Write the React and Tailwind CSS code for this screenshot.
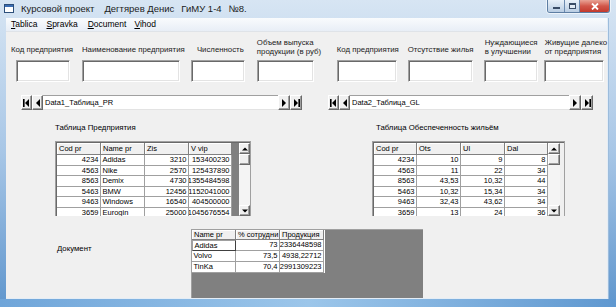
import React from "react";

var LEFT_ROWS = [
  ["4234", "Adidas", "3210", "153400230"],
  ["4563", "Nike", "2570", "125437890"],
  ["8563", "Demix", "4730", "1355484598"],
  ["5463", "BMW", "12456", "1152041000"],
  ["9463", "Windows", "16540", "404500000"],
  ["3659", "Eurogin", "25000", "1045676554"]
];

var RIGHT_ROWS = [
  ["4234", "10", "9", "8"],
  ["4563", "11", "22", "34"],
  ["8563", "43,53", "10,32", "44"],
  ["5463", "10,32", "15,34", "34"],
  ["9463", "32,43", "43,62", "34"],
  ["3659", "13", "24", "36"]
];

var DOC_ROWS = [
  ["Adidas", "73", "2336448598"],
  ["Volvo", "73,5", "4938,22712"],
  ["TinKa", "70,4", "2991309223"]
];

var sunken = "bg-white border border-[#a0a0a0] border-b-white border-r-white shadow-[inset_1px_1px_0_#696969,inset_-1px_-1px_0_#e3e3e3]";
var raised = "bg-[#f0f0f0] border border-white border-b-[#696969] border-r-[#696969] shadow-[inset_-1px_-1px_0_#a0a0a0]";

function Tri({ dir, bar }) {
  var pts = dir === "l" ? "6,0 6,8 2,4" : "2,0 2,8 6,4";
  return (
    <svg width="8" height="8" viewBox="0 0 8 8">
      <polygon points={pts} fill="#000" />
      {bar && dir === "l" && <rect x="0" y="0" width="1.6" height="8" fill="#000" />}
      {bar && dir === "r" && <rect x="6.4" y="0" width="1.6" height="8" fill="#000" />}
    </svg>
  );
}

function Navigator({ w, label }) {
  return (
    <div className={"h-[15px] flex " + w}>
      <div className={"w-[11px] flex items-center justify-center " + raised}><Tri dir="l" bar /></div>
      <div className={"w-[11px] flex items-center justify-center " + raised}><Tri dir="l" /></div>
      <div className="flex-1 bg-white border-t border-b border-t-[#a0a0a0] border-b-[#e3e3e3] flex items-center pl-[2px] text-[7.5px] leading-none">{label}</div>
      <div className={"w-[12px] flex items-center justify-center " + raised}><Tri dir="r" /></div>
      <div className={"w-[12px] flex items-center justify-center " + raised}><Tri dir="r" bar /></div>
    </div>
  );
}

function Arrow({ up }) {
  return (
    <svg width="6" height="4" viewBox="0 0 6 4">
      <polygon points={up ? "0,3.5 6,3.5 3,0.5" : "0,0.5 6,0.5 3,3.5"} fill="#000" />
    </svg>
  );
}

function ScrollBar() {
  return (
    <div className="w-[12px] h-full flex flex-col bg-[#f4f4f4]">
      <div className={"h-[11px] flex items-center justify-center " + raised}><Arrow up /></div>
      <div className={"h-[11px] " + raised}></div>
      <div className="flex-1"></div>
      <div className={"h-[11px] flex items-center justify-center " + raised}><Arrow /></div>
    </div>
  );
}

function Cell({ text, right, w }) {
  return (
    <div className={"h-full shrink-0 px-[1.5px] border-r border-b border-[#a0a0a0] overflow-hidden whitespace-nowrap flex items-center " + (right ? "justify-end " : "") + w}>
      {text}
    </div>
  );
}

function Head({ text, w }) {
  return (
    <div className={"h-full shrink-0 px-[2px] bg-[#f0f0f0] border-r border-b border-[#808080] shadow-[inset_1px_1px_0_#fff] overflow-hidden whitespace-nowrap flex items-center " + w}>
      {text}
    </div>
  );
}

function App() {
  return (
    <div className="w-[616px] h-[307px] overflow-hidden flex flex-col bg-linear-to-b from-[#d7e5f3] via-[#a7c6e6] to-[#5f96cd] font-['Liberation_Sans',Arial,sans-serif] text-black">
      {/* title bar */}
      <div className="h-[18px] flex items-start shrink-0">
        <svg className="mt-[4px] ml-[4px]" width="10" height="9" viewBox="0 0 10 9">
          <rect x="0.5" y="0.5" width="9" height="8" fill="#fff" stroke="#2d4f7a" />
          <rect x="1" y="1" width="8" height="2" fill="#3b6db3" />
        </svg>
        <div className="ml-[7px] mt-[3px] text-[9.5px] leading-[12px] whitespace-nowrap flex text-[#1b1b1b]">
          <span>Курсовой проект</span>
          <span className="ml-[10px]">Дегтярев Денис</span>
          <span className="ml-[7px]">ГиМУ 1-4</span>
          <span className="ml-[7px]">№8.</span>
        </div>
        <div className="ml-auto mr-[6px] flex h-[13px] rounded-b-[3px] overflow-hidden border border-t-0 border-[#5d7ea3] shadow-[0_0_0_1px_rgba(255,255,255,0.6)]">
          <div className="w-[17px] bg-linear-to-b from-[#e9f1f9] to-[#b9cde3] border-r border-[#6c8bb0] flex items-end justify-center pb-[3px]">
            <div className="w-[7px] h-[2px] bg-white border border-[#3a4c66]"></div>
          </div>
          <div className="w-[15px] bg-linear-to-b from-[#e9f1f9] to-[#b9cde3] border-r border-[#6c8bb0] flex items-center justify-center">
            <div className="w-[7px] h-[6px] border border-[#3a4c66] border-t-2 bg-white/40"></div>
          </div>
          <div className="w-[29px] bg-linear-to-b from-[#e8a396] via-[#d2574a] to-[#c3392c] flex items-center justify-center">
            <svg width="8" height="7" viewBox="0 0 8 7">
              <path d="M1 0.5 L7 6.5 M7 0.5 L1 6.5" stroke="#fff" strokeWidth="1.8" />
            </svg>
          </div>
        </div>
      </div>

      <div className="flex-1 flex min-h-0">
        <div className="w-[6px] shrink-0"></div>
        {/* client */}
        <div className="w-[602px] flex flex-col border-r border-b border-[#e4edf6]">
          {/* menu */}
          <div className="h-[14px] shrink-0 bg-linear-to-b from-[#f9fbfd] to-[#e8eef6] border-b border-[#dfe3e8] flex items-center text-[8.5px] leading-none whitespace-nowrap">
            <span className="ml-[5px]"><u>T</u>ablica</span>
            <span className="ml-[9px]"><u>S</u>pravka</span>
            <span className="ml-[10px]"><u>D</u>ocument</span>
            <span className="ml-[8px]"><u>V</u>ihod</span>
          </div>

          {/* form */}
          <div className="flex-1 bg-[#f0f0f0] flex flex-col text-[7.8px] leading-[8.5px]">
            <div className="mt-[7px] h-[17px] flex items-end pl-[5px] whitespace-nowrap text-[#222]">
              <div className="w-[71px] mb-[2px]">Код предприятия</div>
              <div className="w-[115px] mb-[2px]">Наименование предприятия</div>
              <div className="w-[60px] mb-[2px]">Численность</div>
              <div className="w-[80px]">Объем выпуска<br />продукции (в руб)</div>
              <div className="w-[71px] mb-[2px]">Код предприятия</div>
              <div className="w-[77px] mb-[2px]">Отсутствие жилья</div>
              <div className="w-[60px]">Нуждающиеся<br />в улучшении</div>
              <div>Живущие далеко<br />от предприятия</div>
            </div>

            <div className="mt-[4px] h-[22px] flex pl-[10px]">
              <div className={"w-[54px] " + sunken}></div>
              <div className={"ml-[12px] w-[98px] " + sunken}></div>
              <div className={"ml-[11px] w-[54px] " + sunken}></div>
              <div className={"ml-[12px] w-[57px] " + sunken}></div>
              <div className={"ml-[23px] w-[60px] " + sunken}></div>
              <div className={"ml-[11px] w-[65px] " + sunken}></div>
              <div className={"ml-[11px] w-[54px] " + sunken}></div>
              <div className={"ml-[6px] w-[60px] " + sunken}></div>
            </div>

            <div className="mt-[13px] flex pl-[15px]">
              <Navigator w="w-[281px]" label="Data1_Таблица_PR" />
              <div className="ml-[26px]">
                <Navigator w="w-[265px]" label="Data2_Таблица_GL" />
              </div>
            </div>

            <div className="mt-[13px] h-[10px] flex items-center pl-[49px] text-[7.8px] whitespace-nowrap">
              <div className="w-[321px]">Таблица Предприятия</div>
              <div>Таблица Обеспеченность жильём</div>
            </div>

            {/* grids */}
            <div className="mt-[8px] h-[75px] flex pl-[49px] text-[7.5px] leading-none">
              <div className="w-[196px] h-full border border-[#a0a0a0] border-b-0 shadow-[inset_1px_1px_0_#696969] pl-[1px] pt-[1px] flex overflow-hidden">
                <div className="flex flex-col w-[175px] shrink-0 bg-white">
                  <div className="h-[12px] flex shrink-0">
                    <Head text="Cod pr" w="w-[44px]" />
                    <Head text="Name pr" w="w-[44px]" />
                    <Head text="Zis" w="w-[44px]" />
                    <Head text="V vip" w="w-[43px]" />
                  </div>
                  {LEFT_ROWS.map(function(r) {
                    return (
                      <div key={r[0]} className="h-[10.5px] flex shrink-0">
                        <Cell text={r[0]} right w="w-[44px]" />
                        <Cell text={r[1]} w="w-[44px]" />
                        <Cell text={r[2]} right w="w-[44px]" />
                        <Cell text={r[3]} right w="w-[43px]" />
                      </div>
                    );
                  })}
                </div>
                <div className="w-[7px] shrink-0 h-full bg-[#808080]"></div>
                <ScrollBar />
              </div>

              <div className="ml-[121px] w-[193px] h-full border border-[#a0a0a0] border-b-0 shadow-[inset_1px_1px_0_#696969] pl-[1px] pt-[1px] flex overflow-hidden">
                <div className="flex flex-col w-[174px] shrink-0 bg-white">
                  <div className="h-[12px] flex shrink-0">
                    <Head text="Cod pr" w="w-[43px]" />
                    <Head text="Ots" w="w-[44px]" />
                    <Head text="Ul" w="w-[44px]" />
                    <Head text="Dal" w="w-[43px]" />
                  </div>
                  {RIGHT_ROWS.map(function(r) {
                    return (
                      <div key={r[0]} className="h-[10.5px] flex shrink-0">
                        <Cell text={r[0]} right w="w-[43px]" />
                        <Cell text={r[1]} right w="w-[44px]" />
                        <Cell text={r[2]} right w="w-[44px]" />
                        <Cell text={r[3]} right w="w-[43px]" />
                      </div>
                    );
                  })}
                </div>
                <ScrollBar />
              </div>
            </div>

            {/* document */}
            <div className="mt-[13px] h-[69px] flex">
              <div className="w-[185px] pl-[51px] pt-[16px] text-[7.8px]">Документ</div>
              <div className="w-[232px] h-full bg-[#808080] border-t border-l border-[#a0a0a0] text-[7.5px] leading-none">
                <div className="w-[133px] flex flex-col bg-white">
                  <div className="h-[10px] flex">
                    <Head text="Name pr" w="w-[44px]" />
                    <Head text="% сотрудни" w="w-[44px]" />
                    <Head text="Продукция" w="w-[44px]" />
                  </div>
                  {DOC_ROWS.map(function(r, i) {
                    return (
                      <div key={r[0]} className="h-[11px] flex">
                        {i === 0 ? (
                          <div className="w-[44px] h-full shrink-0 px-[1.5px] border border-[#404040] border-t-[#a0a0a0] border-l-[#a0a0a0] flex items-center">{r[0]}</div>
                        ) : (
                          <Cell text={r[0]} w="w-[44px]" />
                        )}
                        <Cell text={r[1]} right w="w-[44px]" />
                        <Cell text={r[2]} right w="w-[44px]" />
                      </div>
                    );
                  })}
                </div>
              </div>
            </div>
          </div>
        </div>
        <div className="w-[8px] shrink-0 border-l border-[#9cbcdc]"></div>
      </div>
      <div className="h-[8px] shrink-0 bg-linear-to-r from-[#6fa5d9] via-[#9cc6ea] to-[#5f98d0]"></div>
    </div>
  );
}

export default App;
